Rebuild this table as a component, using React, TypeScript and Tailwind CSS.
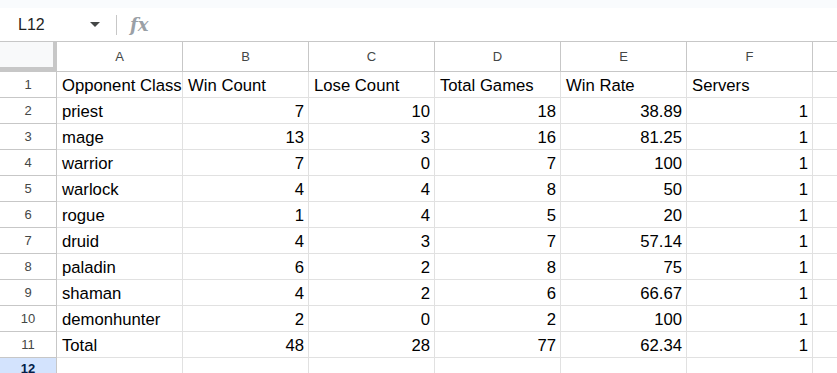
import React from 'react';

const columns = ['A', 'B', 'C', 'D', 'E', 'F'];

const rows: (string | number)[][] = [
  ['Opponent Class', 'Win Count', 'Lose Count', 'Total Games', 'Win Rate', 'Servers'],
  ['priest', 7, 10, 18, 38.89, 1],
  ['mage', 13, 3, 16, 81.25, 1],
  ['warrior', 7, 0, 7, 100, 1],
  ['warlock', 4, 4, 8, 50, 1],
  ['rogue', 1, 4, 5, 20, 1],
  ['druid', 4, 3, 7, 57.14, 1],
  ['paladin', 6, 2, 8, 75, 1],
  ['shaman', 4, 2, 6, 66.67, 1],
  ['demonhunter', 2, 0, 2, 100, 1],
  ['Total', 48, 28, 77, 62.34, 1],
];

function FormulaBar() {
  return (
    <div className="flex h-[34px] items-center border-b border-[#c7c7c7] bg-white">
      <div className="flex w-[116px] items-center pl-[18px] pr-[16px]">
        <span className="text-[16px] text-[#1f1f1f]">L12</span>
        <span className="ml-auto h-0 w-0 border-x-[5px] border-t-[5px] border-x-transparent border-t-[#444746]" />
      </div>
      <div className="h-[20px] w-px bg-[#c7c7c7]" />
      <span className="ml-[13px] font-['DejaVu_Serif',serif] text-[18px] font-bold italic text-[#9aa0a6]">fx</span>
    </div>
  );
}

function HeaderRow() {
  return (
    <div className="flex h-[30px]">
      <div className="w-[57px] shrink-0 border-r-[4px] border-b-[5px] border-[#c7c7c7] bg-[#f8f9fa]" />
      {columns.map((c) => (
        <div
          key={c}
          className="flex w-[126px] shrink-0 items-center justify-center border-r border-b border-[#c7c7c7] text-[13px] text-[#444746]"
        >
          {c}
        </div>
      ))}
      <div className="flex-1 border-b border-[#c7c7c7]" />
    </div>
  );
}

function DataRow({ index, cells }: { index: number; cells: (string | number)[] }) {
  return (
    <div className="flex h-[26px]">
      <div className="flex w-[57px] shrink-0 items-center justify-center border-r border-b border-[#c7c7c7] pt-[1px] text-[13px] text-[#444746]">
        {index}
      </div>
      {cells.map((v, i) => (
        <div
          key={i}
          className={`flex w-[126px] shrink-0 items-center overflow-hidden whitespace-nowrap border-r border-b border-[#e1e1e1] pt-[3px] text-[16.7px] text-black ${
            typeof v === 'number' ? 'justify-end pr-[4px]' : 'pl-[5px]'
          }`}
        >
          {v}
        </div>
      ))}
      <div className="flex-1 border-b border-[#e1e1e1]" />
    </div>
  );
}

export default function App() {
  return (
    <div className="h-[373px] w-[837px] overflow-hidden bg-white font-['Liberation_Sans',Arial,sans-serif]">
      <div className="h-[8px] bg-[#f9fbfd]" />
      <FormulaBar />
      <HeaderRow />
      {rows.map((r, i) => (
        <DataRow key={i} index={i + 1} cells={r} />
      ))}
      <div className="flex h-[15px]">
        <div className="flex w-[57px] shrink-0 items-start justify-center border-r border-[#c7c7c7] bg-[#d3e3fd] pt-[3px] text-[13px] leading-[15px] font-bold text-[#041e49]">
          12
        </div>
        {columns.map((c) => (
          <div key={c} className="w-[126px] shrink-0 border-r border-[#e1e1e1]" />
        ))}
      </div>
    </div>
  );
}
